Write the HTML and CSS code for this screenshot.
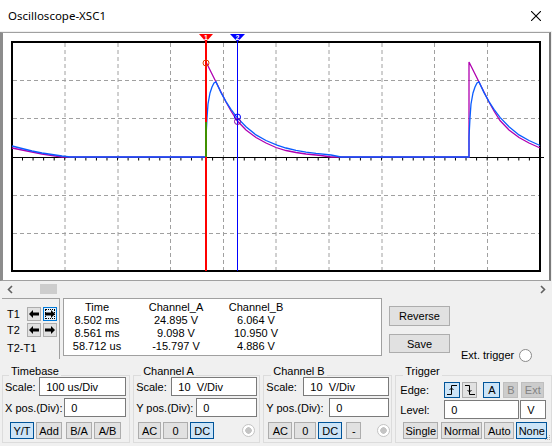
FILE: index.html
```html
<!DOCTYPE HTML>
<html>
<head>
  <title>Oscilloscope-XSC1</title>
  <link rel="stylesheet" href="styles.css">
</head>
<body>
  <div class="titlebar">
    <span class="title">Oscilloscope-XSC1</span>
    <svg class="close" width="10" height="10" viewBox="0 0 10 10"><path d="M0 0L10 10M10 0L0 10" stroke="#000" stroke-width="1.1"/></svg>
  </div>

  <div class="scope">
    <svg class="screen" width="546" height="247" viewBox="3 33 546 247">
      <rect x="12" y="42" width="528" height="229" fill="#fff" stroke="#000" stroke-width="2"/>
      <!-- grille -->
      <g stroke="#a0a0a0" stroke-dasharray="4 3" fill="none">
        <path d="M65 43V270M118 43V270M170.5 43V270M223.5 43V270M276 43V270M329 43V270M382 43V270M434.5 43V270M487.5 43V270"/>
        <path d="M13 80.5H539M13 118.5H539M13 195.5H539M13 233.5H539"/>
      </g>
      <path d="M12 157.5H544" stroke="#000"/>
      <path d="M22 159H540" stroke="#000" stroke-width="3" stroke-dasharray="1 9.56"/>
      <!-- canal A -->
      <path fill="none" stroke="#b000b0" stroke-width="1.3" d="M12 148L22 150L32 152L42 154L52 155.5L62 157L206 157L206 62L211 72L216 82L221 92L226 102L231 111L237 120.5L246 130L256 137.5L266 143L276 147.5L286 150.5L296 152.5L306 154L321 155.5L331 157L469 157L469 62L474 72L479 82L484 92L489 102L494 111L500 120.5L509 130L519 137.5L529 143L539 147.5L540 148"/>
      <!-- canal B -->
      <path fill="none" stroke="#0a5cff" stroke-width="1.3" d="M12 146L22 148.5L32 151L42 153L52 154.5L62 156L70 157L206 157L206 137L207 118L208 104L210 93L212 87L214 83L216 82L221 92.6L226 101.6L231 109.4L237 117.4L246 126.8L256 134.9L266 140.5L277 145.1L286 148L296 150.3L306 152.1L316 153.4L331 155L341 157L469 157L469 137L470 118L471 104L473 93L475 87L477 83L479 82L484 92.6L489 101.6L494 109.4L500 117.4L509 126.8L519 134.9L529 140.5L540 145.5"/>
      <!-- cursori -->
      <path d="M206 35V271" stroke="#ff0000" stroke-width="2"/>
      <path d="M206 122V157" stroke="#00c000" stroke-width="1.5"/>
      <path d="M237.5 35V271" stroke="#0000ff"/>
      <circle cx="206" cy="63" r="3" fill="none" stroke="#e04000"/>
      <circle cx="237.5" cy="117" r="3" fill="none" stroke="#0000ff"/>
      <circle cx="237.5" cy="121.5" r="3" fill="none" stroke="#8000a0"/>
      <polygon points="199,34 213,34 206,42" fill="#ff0000"/>
      <text x="206" y="39.5" class="cmark">1</text>
      <polygon points="230,34 245,34 237.5,42" fill="#0000ff"/>
      <text x="237.5" y="39.5" class="cmark">2</text>
    </svg>
  </div>

  <div class="hscroll">
    <svg width="6" height="9" viewBox="0 0 6 9"><path d="M5 1L1.5 4.5L5 8" fill="none" stroke="#606060" stroke-width="1.6"/></svg>
    <div class="thumb"></div>
    <svg class="right" width="6" height="9" viewBox="0 0 6 9"><path d="M1 1L4.5 4.5L1 8" fill="none" stroke="#606060" stroke-width="1.6"/></svg>
  </div>

  <div class="readout">
    <div class="cursors">
      <div class="crow">
        <span class="clabel">T1</span>
        <button class="arrow-button"><svg width="10" height="8" viewBox="0 0 10 8"><polygon points="0,4 4,0 4,2.5 10,2.5 10,5.5 4,5.5 4,8"/></svg></button>
        <button class="arrow-button focus"><svg width="10" height="8" viewBox="0 0 10 8"><polygon points="10,4 6,0 6,2.5 0,2.5 0,5.5 6,5.5 6,8"/></svg></button>
      </div>
      <div class="crow">
        <span class="clabel">T2</span>
        <button class="arrow-button"><svg width="10" height="8" viewBox="0 0 10 8"><polygon points="0,4 4,0 4,2.5 10,2.5 10,5.5 4,5.5 4,8"/></svg></button>
        <button class="arrow-button"><svg width="10" height="8" viewBox="0 0 10 8"><polygon points="10,4 6,0 6,2.5 0,2.5 0,5.5 6,5.5 6,8"/></svg></button>
      </div>
      <div class="crow diff"><span class="clabel">T2-T1</span></div>
    </div>

    <div class="measure">
      <span>Time</span><span>Channel_A</span><span>Channel_B</span>
      <span>8.502 ms</span><span>24.895 V</span><span>6.064 V</span>
      <span>8.561 ms</span><span>9.098 V</span><span>10.950 V</span>
      <span>58.712 us</span><span>-15.797 V</span><span>4.886 V</span>
    </div>

    <div class="actions">
      <button class="btn reverse">Reverse</button>
      <button class="btn save">Save</button>
    </div>
    <div class="ext">Ext. trigger <span class="radio"></span></div>
  </div>

  <div class="settings">
    <div class="group timebase">
      <span class="gtitle">Timebase</span>
      <div class="row first"><span class="lbl">Scale:</span><input class="field w87" value="100 us/Div"></div>
      <div class="row"><span class="lbl">X pos.(Div):</span><input class="field w62" value="0"></div>
      <div class="btnrow">
        <button class="btn on w24 ml6">Y/T</button>
        <button class="btn w26 ml2">Add</button>
        <button class="btn w26 ml4">B/A</button>
        <button class="btn w27 ml2">A/B</button>
      </div>
    </div>

    <div class="group channel">
      <span class="gtitle">Channel A</span>
      <div class="row first"><span class="lbl">Scale:</span><input class="field w86" value="10  V/Div"></div>
      <div class="row"><span class="lbl">Y pos.(Div):</span><input class="field w61" value="0"></div>
      <div class="btnrow">
        <button class="btn w23 ml3">AC</button>
        <button class="btn w25 ml2">0</button>
        <button class="btn on w24 ml2">DC</button>
        <span class="radio dim ml28"></span>
      </div>
    </div>

    <div class="group channel">
      <span class="gtitle">Channel B</span>
      <div class="row first"><span class="lbl">Scale:</span><input class="field w86" value="10  V/Div"></div>
      <div class="row"><span class="lbl">Y pos.(Div):</span><input class="field w60" value="0"></div>
      <div class="btnrow">
        <button class="btn w24 ml3">AC</button>
        <button class="btn w22 ml2">0</button>
        <button class="btn on w24 ml2">DC</button>
        <button class="btn w15 ml4">-</button>
        <span class="radio dim ml16"></span>
      </div>
    </div>

    <div class="group trigger">
      <span class="gtitle">Trigger</span>
      <div class="row edge">
        <span class="lbl">Edge:</span>
        <button class="btn on w16 tall"><svg width="10" height="10" viewBox="0 0 10 10"><path d="M0 9.5H4.5V0.5H10M2.5 5L4.5 3L6.5 5" fill="none" stroke="#000"/></svg></button>
        <button class="btn w15 ml2 tall"><svg width="10" height="10" viewBox="0 0 10 10"><path d="M0 0.5H4.5V9.5H10M2.5 5L4.5 7L6.5 5" fill="none" stroke="#000"/></svg></button>
        <button class="btn on w17 ml6 tall">A</button>
        <button class="btn off w15 ml3 tall">B</button>
        <button class="btn off w23 ml3 tall">Ext</button>
      </div>
      <div class="row"><span class="lbl">Level:</span><input class="field w75" value="0"><input class="field w26 unit" value="V"></div>
      <div class="btnrow trig">
        <button class="btn w35 ml6">Single</button>
        <button class="btn w41 ml3">Normal</button>
        <button class="btn w30 ml2">Auto</button>
        <button class="btn on w31 ml2">None</button>
      </div>
    </div>
  </div>

  <svg class="grip" width="6" height="6" viewBox="0 0 6 6"><g fill="#b0b0b0"><rect x="4" y="0" width="1" height="1"/><rect x="2" y="2" width="1" height="1"/><rect x="4" y="2" width="1" height="1"/><rect x="0" y="4" width="1" height="1"/><rect x="2" y="4" width="1" height="1"/><rect x="4" y="4" width="1" height="1"/></g></svg>
</body>
</html>
```

FILE: styles.css
```css
body {
  margin: 0;
  width: 552px;
  height: 446px;
  overflow: hidden;
  background-color: #f0f0f0;
  font-family: "Liberation Sans", Arial, sans-serif;
  font-size: 11px;
  color: #000;
}

button, input {
  font: inherit;
  color: inherit;
}

.titlebar {
  height: 31px;
  background-color: #fff;
  display: flex;
  align-items: center;
  justify-content: space-between;
  padding: 0 11px 0 8px;
  font-family: "Noto Sans", sans-serif;
  font-size: 11.5px;
}

.scope {
  height: 247px;
  margin: 1px 1px 0 0;
  border: 1px solid #a0a0a0;
  border-left: 3px solid #8c8c8c;
  border-right: 2px solid #7a7a7a;
  background-color: #fff;
}

.screen {
  display: block;
}

.cmark {
  font-family: "Liberation Sans", sans-serif;
  font-size: 7px;
  font-weight: bold;
  fill: #fff;
  text-anchor: middle;
}

/* bara de derulare */
.hscroll {
  height: 16px;
  display: flex;
  align-items: center;
  padding: 0 6px 0 7px;
}

.hscroll .thumb {
  width: 17px;
  height: 10px;
  margin-left: 27px;
  background-color: #cdcdcd;
}

.hscroll .right {
  margin-left: auto;
}

.readout {
  display: flex;
  height: 62px;
}

.cursors {
  width: 52px;
  margin: 1px 0 0 2px;
  padding: 8px 0 0 5px;
  border-top: 1px solid #a0a0a0;
  border-right: 1px solid #a0a0a0;
}

.crow {
  display: flex;
  align-items: center;
  height: 14px;
  margin-bottom: 2px;
}

.crow.diff {
  margin-top: 4px;
}

.clabel {
  width: 20px;
  white-space: nowrap;
}

.arrow-button {
  width: 14px;
  height: 14px;
  margin-right: 2px;
  padding: 0;
  display: flex;
  align-items: center;
  justify-content: center;
  background-color: #e1e1e1;
  border: 1px solid #adadad;
}

.arrow-button.focus {
  border-color: #0078d7;
  background-color: #e5f1fb;
  outline: 1px dotted #000;
  outline-offset: -3px;
}

.measure {
  width: 319px;
  height: 58px;
  margin: 1px 0 0 3px;
  padding-top: 2px;
  box-sizing: border-box;
  background-color: #fff;
  border: 1px solid #a0a0a0;
  display: grid;
  grid-template-columns: 66px 92px 68px;
  grid-auto-rows: 13px;
  line-height: 13px;
  text-align: center;
}

.actions {
  display: flex;
  flex-direction: column;
  margin: 9px 0 0 7px;
}

.btn {
  height: 17px;
  padding: 0;
  box-sizing: border-box;
  background-color: #e1e1e1;
  border: 1px solid #adadad;
  display: inline-flex;
  align-items: center;
  justify-content: center;
  flex-shrink: 0;
}

.btn.on {
  background-color: #cce4f7;
  border-color: #005499;
}

.btn.off {
  background-color: #cccccc;
  border-color: #bfbfbf;
  color: #838383;
}

.reverse {
  width: 61px;
  height: 20px;
}

.save {
  width: 61px;
  height: 19px;
  margin-top: 8px;
}

.ext {
  display: flex;
  align-items: center;
  height: 14px;
  margin: 51px 0 0 11px;
}

.radio {
  display: inline-block;
  width: 11px;
  height: 11px;
  margin-left: 5px;
  border: 1px solid #8a8a8a;
  border-radius: 50%;
  background-color: #fff;
  box-sizing: content-box;
}

.radio.dim {
  border-color: #c4c4c4;
  background: radial-gradient(circle, #c4c4c4 0 3px, #fff 3.5px);
}

/* casetele de jos */
.settings {
  display: flex;
  padding: 16px 0 0 2px;
}

.group {
  border: 1px solid #dcdcdc;
  height: 66px;
  margin-right: 3px;
  padding: 0 1px;
}

.timebase { width: 126px; }
.channel { width: 125px; }
.trigger { width: 155px; margin-right: 0; }

.gtitle {
  display: block;
  width: fit-content;
  margin: -11px 0 0 5px;
  padding: 0 2px;
  line-height: 13px;
  background-color: #f0f0f0;
}

.channel .gtitle,
.trigger .gtitle {
  margin-left: 6px;
}

.row {
  display: flex;
  align-items: center;
  height: 19px;
  margin-top: 2px;
}

.row.first {
  margin-top: -1px;
}

.row.edge {
  height: 16px;
  margin-top: 4px;
}

.lbl {
  flex: 1;
  padding-left: 1px;
}

.trigger .lbl {
  flex: none;
  width: 44px;
  padding-left: 3px;
}

.field {
  height: 19px;
  box-sizing: border-box;
  border: 1px solid #7a7a7a;
  background-color: #fff;
  padding: 0 0 0 6px;
  margin: 0 2px 0 0;
  outline: none;
}

.channel .field { margin-right: 1px; }
.trigger .field { margin-right: 0; }
.trigger .field.unit { margin-left: 1px; }

.btnrow {
  display: flex;
  align-items: center;
  margin-top: 5px;
}

.btnrow.trig {
  margin-top: 3px;
}

.tall { height: 16px; }

.w15 { width: 15px; }
.w16 { width: 16px; }
.w17 { width: 17px; }
.w22 { width: 22px; }
.w23 { width: 23px; }
.w24 { width: 24px; }
.w25 { width: 25px; }
.w26 { width: 26px; }
.w27 { width: 27px; }
.w30 { width: 30px; }
.w31 { width: 31px; }
.w35 { width: 35px; }
.w41 { width: 41px; }
.w60 { width: 60px; }
.w61 { width: 61px; }
.w62 { width: 62px; }
.w75 { width: 75px; }
.w86 { width: 86px; }
.w87 { width: 87px; }

.ml2 { margin-left: 2px; }
.ml3 { margin-left: 3px; }
.ml4 { margin-left: 4px; }
.ml6 { margin-left: 6px; }
.ml16 { margin-left: 16px; }
.ml28 { margin-left: 28px; }

.grip {
  display: block;
  margin: -8px 0 0 545px;
}
```
